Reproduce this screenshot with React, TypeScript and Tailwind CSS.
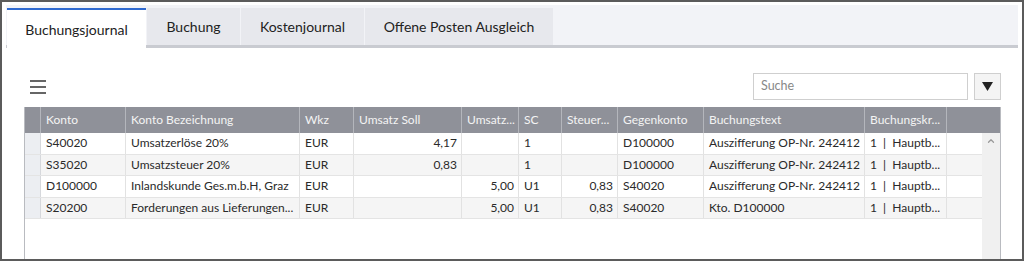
import { ChevronUp } from "lucide-react";

const cols = [
  { key: "ind", w: 16, label: "" },
  { key: "konto", w: 85, label: "Konto" },
  { key: "bez", w: 174, label: "Konto Bezeichnung" },
  { key: "wkz", w: 54, label: "Wkz" },
  { key: "soll", w: 108, label: "Umsatz Soll", right: true },
  { key: "haben", w: 57, label: "Umsatz...", right: true },
  { key: "sc", w: 43, label: "SC" },
  { key: "steuer", w: 56, label: "Steuer...", right: true },
  { key: "gegen", w: 86, label: "Gegenkonto" },
  { key: "text", w: 161, label: "Buchungstext" },
  { key: "kreis", w: 82, label: "Buchungskr..." },
];

const rows: Record<string, string>[] = [
  { konto: "S40020", bez: "Umsatzerlöse 20%", wkz: "EUR", soll: "4,17", haben: "", sc: "1", steuer: "", gegen: "D100000", text: "Auszifferung OP-Nr. 242412", kreis: "1  |  Hauptb..." },
  { konto: "S35020", bez: "Umsatzsteuer 20%", wkz: "EUR", soll: "0,83", haben: "", sc: "1", steuer: "", gegen: "D100000", text: "Auszifferung OP-Nr. 242412", kreis: "1  |  Hauptb..." },
  { konto: "D100000", bez: "Inlandskunde Ges.m.b.H, Graz", wkz: "EUR", soll: "", haben: "5,00", sc: "U1", steuer: "0,83", gegen: "S40020", text: "Auszifferung OP-Nr. 242412", kreis: "1  |  Hauptb..." },
  { konto: "S20200", bez: "Forderungen aus Lieferungen...", wkz: "EUR", soll: "", haben: "5,00", sc: "U1", steuer: "0,83", gegen: "S40020", text: "Kto. D100000", kreis: "1  |  Hauptb..." },
];

const tabs = ["Buchungsjournal", "Buchung", "Kostenjournal", "Offene Posten Ausgleich"];
const tabWidths = [139, 93, 123, 188];

export default function App() {
  return (
    <div
      className="w-[1024px] h-[261px] overflow-hidden bg-white border-2 border-[#5b5b5b] text-[#222] flex flex-col"
      style={{ fontFamily: 'Lato, "Open Sans", sans-serif' }}
    >
      {/* Tab strip */}
      <div className="mx-[4px] mt-[3px] h-[43px] shrink-0 bg-[#f2f3f7] border-b-[3px] border-[#c9cbd1] flex items-end pl-[1px]">
        {tabs.map((t, i) =>
          i === 0 ? (
            <div
              key={t}
              style={{ width: tabWidths[i] }}
              className="h-[40px] -mb-[3px] bg-white border-t-2 border-[#2f6ad0] flex items-center justify-center text-[14px] text-[#222]"
            >
              {t}
            </div>
          ) : (
            <div
              key={t}
              style={{ width: tabWidths[i] }}
              className="h-[37px] ml-[1px] bg-[#e7e8ed] flex items-center justify-center text-[14px] text-[#222]"
            >
              {t}
            </div>
          )
        )}
      </div>

      {/* Toolbar */}
      <div className="h-[59px] shrink-0 flex items-end pb-[7px] pl-[24px] pr-[21px]">
        <div className="flex-1 flex items-center h-[27px]">
          <svg width="18" height="16" viewBox="0 0 18 16" className="ml-[3px]">
            <rect x="1" y="1" width="16" height="2" fill="#666" />
            <rect x="1" y="7" width="16" height="2" fill="#666" />
            <rect x="1" y="13" width="16" height="2" fill="#666" />
          </svg>
        </div>
        <div className="w-[215px] h-[27px] border border-[#cfcfcf] flex items-center px-[7px] text-[12.5px] text-[#888]">
          Suche
        </div>
        <div className="ml-[6px] w-[27px] h-[27px] border border-[#cfcfcf] bg-[#f4f4f4] flex items-center justify-center">
          <svg width="11" height="9" viewBox="0 0 11 9">
            <path d="M0 0 H11 L5.5 9 Z" fill="#222" />
          </svg>
        </div>
      </div>

      {/* Grid */}
      <div className="ml-[22px] w-[977px] flex-1 border-l border-r border-[#b9bbc0] flex flex-col">
        <div className="flex h-[26px] shrink-0 bg-[#8f9199] text-[12px] text-[#f4f4f4]">
          {cols.map((c) => (
            <div
              key={c.key}
              style={{ width: c.w }}
              className="shrink-0 h-full border-r border-[#b4b6bc] flex items-center pl-[5px] pr-[1px] whitespace-nowrap overflow-hidden"
            >
              {c.label}
            </div>
          ))}
          <div className="flex-1" />
        </div>
        <div className="flex flex-1">
          <div className="w-[958px]">
            {rows.map((r, ri) => (
              <div
                key={ri}
                className={`flex h-[21.5px] text-[12px] text-[#2a2a2a] border-b border-[#e4e4e4] ${ri % 2 === 1 ? "bg-[#f5f5f5]" : "bg-white"}`}
              >
                {cols.map((c) =>
                  c.key === "ind" ? (
                    <div key={c.key} style={{ width: c.w }} className="shrink-0 bg-[#eceef2] border-r border-[#d6d8dc]" />
                  ) : (
                    <div
                      key={c.key}
                      style={{ width: c.w }}
                      className={`shrink-0 border-r border-[#e2e2e2] flex items-center pl-[5px] pr-[4px] whitespace-pre overflow-hidden ${c.right ? "justify-end" : ""}`}
                    >
                      {r[c.key]}
                    </div>
                  )
                )}
                <div className="flex-1" />
              </div>
            ))}
          </div>
          <div className="w-[18px] bg-[#f0f0f0] flex justify-center pt-[3px]">
            <ChevronUp size={10} strokeWidth={3} color="#9a9a9a" />
          </div>
        </div>
      </div>
    </div>
  );
}
